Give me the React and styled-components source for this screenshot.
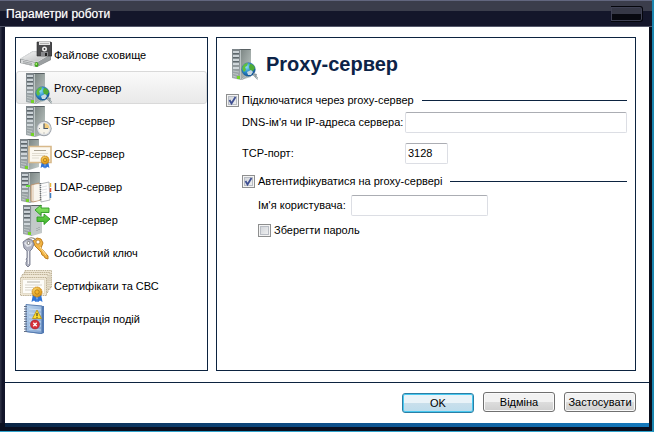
import { useState } from "react";
import styled, { createGlobalStyle, css } from "styled-components";

const GlobalStyle = createGlobalStyle`
  * {
    box-sizing: border-box;
  }
  body {
    margin: 0;
    font-family: "Liberation Sans", Arial, sans-serif;
    font-size: 11px;
    line-height: 16px;
    color: #000;
  }
  button,
  input {
    font: inherit;
    color: inherit;
  }
`;

const WindowBlock = styled.div`
  display: flex;
  flex-direction: column;
  min-height: 100vh;
  background: linear-gradient(to right, #2a2d40 1px, #12152a 2px, #12152a 50%, #0a0e1c);
  border-right: 2px solid #1a86b0;
  border-bottom: 1px solid #2fa3cc;
`;

const TitleBar = styled.header`
  display: flex;
  justify-content: space-between;
  align-items: center;
  height: 27px;
  padding: 0 9px 0 6px;
  background: linear-gradient(#3b3d4b 10px, #14162a 10px);
  border-top: 1px solid #62667e;
  border-bottom: 1px solid #55586a;
  h1 {
    margin: 0;
    font-size: 12px;
    font-weight: 400;
    color: #fff;
    text-shadow: 0 0 1px #aaa;
  }
`;

const CaptionButton = styled.button`
  width: 32px;
  height: 16px;
  padding: 0;
  border: 1px solid #05060c;
  border-left: 0;
  border-radius: 0 3px 3px 0;
  background: linear-gradient(#363846 7px, #080910 7px);
  box-shadow: inset 0 0 0 1px #3f4154;
`;

const Client = styled.div`
  display: flex;
  flex: 1;
  flex-direction: column;
  margin: 0 3px 0 5px;
  background: #fff;
`;

const Content = styled.div`
  display: flex;
  flex: 1;
  gap: 8px;
  padding: 10px 13px 11px 10px;
  border-bottom: 1px solid #0c2340;
`;

const Sidebar = styled.nav`
  flex: 0 0 193px;
  border: 1px solid #0c2340;
`;

const NavItem = styled.button`
  display: flex;
  align-items: center;
  gap: 2px;
  width: 100%;
  height: 33px;
  padding: 0 3px;
  border: 1px solid transparent;
  border-radius: 3px;
  background: none;
  white-space: nowrap;
  ${(props) =>
    props.$active &&
    css`
      border-color: #d9d9d9;
      background: linear-gradient(#fafafa, #e9e9e9);
    `}
`;

const Icon = styled.svg`
  flex: none;
  width: 32px;
  height: 32px;
`;

const Panel = styled.main`
  flex: 1;
  padding: 9px 8px 9px 9px;
  border: 1px solid #0c2340;
`;

const PanelHeader = styled.div`
  display: flex;
  align-items: center;
  gap: 8px;
  height: 33px;
  margin-bottom: 9px;
  h2 {
    margin: 0;
    font-size: 20px;
    line-height: 24px;
    color: #0c2348;
  }
`;

const Group = styled.div`
  padding-left: 16px;
`;

const Row = styled.div`
  display: flex;
  align-items: center;
  height: 22px;
  margin-top: ${(props) => props.$space || 0}px;
  white-space: nowrap;
`;

const Rule = styled.span`
  flex: 1;
  height: 1px;
  margin-left: 8px;
  background: #0c2340;
`;

const FieldLabel = styled.label`
  flex: none;
  width: ${(props) => props.$width}px;
`;

const TextInput = styled.input`
  ${(props) => (props.$width ? `width: ${props.$width}px;` : "flex: 1;")}
  min-width: 0;
  height: 21px;
  padding: 0 2px;
  border: 1px solid #dcdee4;
  border-top-color: #abadb3;
  border-radius: 2px;
  background: #fff;
`;

const CheckLabel = styled.label`
  display: flex;
  align-items: center;
  gap: 3px;
`;

const CheckBox = styled.span`
  display: grid;
  width: 13px;
  height: 13px;
  > * {
    grid-area: 1 / 1;
    width: 13px;
    height: 13px;
    margin: 0;
  }
  input {
    appearance: none;
    border: 1px solid #8e8f8f;
    background: linear-gradient(135deg, #cbcfd5, #f6f6f6);
    box-shadow: inset 0 0 0 1px #f4f4f4, inset 0 0 0 2px #b9bdc4;
  }
  svg {
    pointer-events: none;
  }
`;

const Footer = styled.footer`
  display: flex;
  justify-content: flex-end;
  align-items: flex-start;
  gap: 9px;
  padding: 9px 13px 10px;
`;

const Button = styled.button`
  width: 72px;
  height: 20px;
  padding: 0;
  border: 1px solid #707070;
  border-radius: 3px;
  background: linear-gradient(#f2f2f2 50%, #dddddd 50%, #cfcfcf);
  box-shadow: inset 0 0 0 1px #fafafa;
  line-height: 16px;
  ${(props) =>
    props.$primary &&
    css`
      margin-top: 1px;
      border-color: #2c7fa5;
      background: linear-gradient(#e9f3f8 50%, #c9dfeb 50%, #bcdcec);
      box-shadow: inset 0 0 0 1px #48c8f0;
    `}
`;

const BottomEdge = styled.div`
  height: 8px;
  background:
    linear-gradient(to right, #0b2545, #0d4f8a 50%, #1479bd) 5px 0 / calc(100% - 8px) 4px no-repeat,
    #0a0f20;
`;

const Defs = () => (
  <svg width="0" height="0" style={{ display: "block", height: 0 }} aria-hidden="true">
    <defs>
      <linearGradient id="side" x1="0" y1="0" x2="1" y2="1">
        <stop offset="0" stopColor="#76807e" />
        <stop offset="1" stopColor="#c4cdca" />
      </linearGradient>
      <linearGradient id="front" x1="0" y1="0" x2="0" y2="1">
        <stop offset="0" stopColor="#7b8388" />
        <stop offset="1" stopColor="#a2abad" />
      </linearGradient>
      <radialGradient id="globe" cx="0.35" cy="0.3" r="0.8">
        <stop offset="0" stopColor="#8ce0f5" />
        <stop offset="0.5" stopColor="#278bc9" />
        <stop offset="1" stopColor="#0b3f87" />
      </radialGradient>
      <linearGradient id="drive" x1="0" y1="0" x2="1" y2="1">
        <stop offset="0" stopColor="#f8f8f8" />
        <stop offset="1" stopColor="#b5b7b8" />
      </linearGradient>
      <radialGradient id="gold" cx="0.4" cy="0.35" r="0.7">
        <stop offset="0" stopColor="#ffe07a" />
        <stop offset="1" stopColor="#d58a08" />
      </radialGradient>
      <linearGradient id="arrow" x1="0" y1="0" x2="0" y2="1">
        <stop offset="0" stopColor="#8fe86a" />
        <stop offset="1" stopColor="#3fb52a" />
      </linearGradient>
      <linearGradient id="book" x1="0" y1="0" x2="1" y2="1">
        <stop offset="0" stopColor="#b9d3ee" />
        <stop offset="1" stopColor="#7fa2d0" />
      </linearGradient>
    </defs>
  </svg>
);

const Tower = ({ x = 0, light }) => (
  <g transform={`translate(${x} 0)`}>
    <path d="M7 1h12v28l-10 3z" fill={light ? "#c3c9c9" : "url(#side)"} />
    <path d="M0 1h7l2 1v30l-9-2z" fill="url(#front)" />
    <path d="M0 1h18l1 1H9L7 1z" fill="#596164" />
    <path d="M1 4h6M1 8h6M1 12h6M1 16h6M1 20h6" stroke="#e3eaee" strokeWidth="1.6" />
    <path d="M1 5.5h6M1 9.5h6M1 13.5h6" stroke="#535d62" strokeWidth="0.8" />
    <path d="M1 23l6 1M1 25.500l5 1M1 28l3 1" stroke="#c9d0d1" strokeWidth="0.8" />
    <path d="M8.500 2v29" stroke="#c9d2d1" strokeWidth="0.8" />
    <rect x="5" y="28" width="3" height="3" fill="#74d328" />
  </g>
);

const Rosette = ({ x, y, r }) => (
  <g transform={`translate(${x} ${y})`}>
    <path
      d={`M${-r * 0.8} ${r * 0.4}l${-r * 0.3} ${r * 1.6} ${r * 0.5} ${-r * 0.3} ${r * 0.5} ${r * 0.4} ${r * 0.2} ${-r}z
        M${r * 0.8} ${r * 0.4}l${r * 0.3} ${r * 1.6} ${-r * 0.5} ${-r * 0.3} ${-r * 0.5} ${r * 0.4} ${-r * 0.2} ${-r}z`}
      fill="#2f74d6"
    />
    <circle r={r} fill="url(#gold)" stroke="#c17d0c" strokeWidth="0.8" strokeDasharray="1.5 0.6" />
    <circle r={r * 0.45} fill="#f4b52c" stroke="#a66a08" strokeWidth="0.7" />
  </g>
);

const StorageIcon = () => (
  <Icon viewBox="0 0 32 32">
    <path d="M0 20L13 12l18 3v6L17 28 0 24z" fill="#8c8f91" />
    <path d="M1 19.5L13 12.5l17 3L17 23z" fill="url(#drive)" stroke="#d8dadb" />
    <path d="M1 20.5l15.5 3.5v4L1 24z" fill="#d6d8d9" />
    <path d="M17 24l13-8v4.500L17 28z" fill="#9b9fa1" />
    <path d="M3 22.500l9 2M3 24l9 2" stroke="#8b8f91" strokeWidth="0.7" />
    <ellipse cx="16.500" cy="25.500" rx="2" ry="2.500" fill="#3fa51e" />
    <circle cx="16.300" cy="25" r="0.900" fill="#b8f27d" />
    <path d="M17 3h14l1 1v13H17z" fill="#4b4b4d" stroke="#2c2c2e" strokeWidth="0.600" />
    <path d="M19 3h11v3H19z" fill="#e6e6e6" />
    <path d="M20 4.500h9" stroke="#999" strokeWidth="0.700" />
    <path d="M21 13h7v4h-7z" fill="#88898c" />
    <circle cx="24.500" cy="10" r="2.500" fill="#ededed" />
    <circle cx="24.500" cy="10" r="0.900" fill="#333" />
    <path d="M25 14h2v3h-2z" fill="#222" />
  </Icon>
);

const ProxyIcon = () => (
  <Icon viewBox="0 0 32 32">
    <Tower x={6} />
    <path d="M16 31l5-4 6-1 5 5" fill="none" stroke="#8e9a9d" strokeWidth="1.800" />
    <path d="M16 31l5-4 6-1 5 5" fill="none" stroke="#e6ecec" strokeWidth="0.600" />
    <circle cx="22.500" cy="21.500" r="6.800" fill="url(#globe)" stroke="#1b5c94" strokeWidth="0.500" />
    <path d="M17 18c1-2 3-3 5-3l-1 3-2 1 1 3-2 2c-2-2-2-4-1-6z" fill="#62bf3b" />
    <path d="M24 16c3 0 4 2 5 4l-2 3-3-1-1-3z" fill="#4fac35" />
    <path d="M21 24l4-2 2 2-2 3h-3z" fill="#c6d8e2" />
    <path d="M27 25l4 1-1 4z" fill="#8f9ca1" />
  </Icon>
);

const TspIcon = () => (
  <Icon viewBox="0 0 32 32">
    <Tower x={6} />
    <circle cx="24" cy="23.500" r="7.700" fill="#9ba1a7" />
    <circle cx="24" cy="23.500" r="6.800" fill="#dcdfe3" />
    <circle cx="24" cy="23.500" r="5.500" fill="#f7f4ea" />
    <path d="M24 23.500V18a5.500 5.500 0 0 1 5.500 5.500z" fill="#f4cd7d" />
    <path d="M24 18.500v5h4" fill="none" stroke="#4a5768" strokeWidth="1.200" />
    <path d="M24 27.500v1M19 23.500h1" stroke="#8a8f95" />
  </Icon>
);

const OcspIcon = () => (
  <Icon viewBox="0 0 32 32">
    <Tower />
    <path d="M9 8.500h22v16H9z" fill="#fbf8f0" stroke="#d8b98a" strokeWidth="1.600" />
    <path d="M14 12.500h12" stroke="#aaa392" />
    <path d="M12 15.500h16M12 17.500h13M12 20h7" stroke="#d9d4c8" strokeWidth="0.800" />
    <Rosette x={25} y={22} r={4} />
  </Icon>
);

const LdapIcon = () => (
  <Icon viewBox="0 0 32 32">
    <Tower x={1} />
    <rect x="6" y="14" width="4" height="2" fill="#67df3c" />
    <path d="M11 14l8-2 2 17-8 2-2-1z" fill="#e9dccb" stroke="#b78a61" strokeWidth="0.800" />
    <path d="M14 14l6-1v16l-6 1z" fill="#f8f5ee" />
    <path d="M20 13l9-2 1 18-9 2z" fill="#fdfdfd" stroke="#9fa5a8" strokeWidth="0.800" />
    <path d="M22 16l5-1M22 19l5-1M22 22l5-1M22 25l5-1" stroke="#d4d9dc" strokeWidth="0.700" />
    <path d="M20.500 12v18" stroke="#6f7477" strokeWidth="1.500" strokeDasharray="1 1" />
    <path d="M30.500 12v4" stroke="#e8b53c" strokeWidth="1.500" />
    <path d="M30.500 17v4" stroke="#d84f35" strokeWidth="1.500" />
    <path d="M30.500 22v5" stroke="#3d7cc2" strokeWidth="1.500" />
  </Icon>
);

const CmpIcon = () => (
  <Icon viewBox="0 0 32 32">
    <Tower x={3} light />
    <path
      d="M15 6l6-5v3h8v4.500h-8v3zM30 15l-6-5v3h-7v4.500h7v3z"
      fill="url(#arrow)"
      stroke="#2c9a22"
      strokeWidth="0.900"
    />
    <path d="M17 24v4M19 23v4" stroke="#8e9899" strokeDasharray="1 1" />
  </Icon>
);

const KeyIcon = () => (
  <Icon viewBox="0 0 32 32">
    <path d="M13 4l4-3 4 1 2 4-2 5 7 8v3l-3-1-1-2-2-1-1-3-2-2-4-4z" fill="#f2b443" stroke="#b57413" strokeWidth="0.900" />
    <circle cx="18" cy="5" r="2" fill="#fff" stroke="#a96b14" strokeWidth="0.700" />
    <path d="M20 10l6 8" stroke="#ffe4a2" />
    <path d="M3 5l4-3 5 1 2 4-2 5-2 2v14l-2 2-2-2v-3l1-1-1-2 1-1V14l-3-3z" fill="#b1b4c2" stroke="#777b8c" strokeWidth="0.900" />
    <path d="M4 6l4-2 4 2-1 3-4 1z" fill="#e2e4eb" />
    <circle cx="8.500" cy="6" r="1.500" fill="#fff" stroke="#555" strokeWidth="0.700" />
    <path d="M8.500 14v13" stroke="#edeef3" />
    <path d="M7 3c2-3 6-3 9 0" fill="none" stroke="#8d8577" strokeWidth="1.200" />
  </Icon>
);

const CertIcon = () => (
  <Icon viewBox="0 0 32 32">
    <g fill="#efe7d5" stroke="#b8ab8e" strokeWidth="0.900" strokeDasharray="1.500 0.700">
      <path d="M5 0.500h26.500v17H5z" />
      <path d="M4 2.500h26v17H4z" />
      <path d="M2 4.500h26v18H2z" />
      <path d="M0.500 7.500h26v18H0.500z" />
    </g>
    <path d="M2.500 9.500h22v14h-22z" fill="#fdfcf8" stroke="#ddd4be" strokeWidth="0.700" />
    <path d="M7 12h13" stroke="#b5b2a8" />
    <path d="M5 15h17M5 17.500h9M5 20h7" stroke="#d5d3ca" strokeWidth="0.900" />
    <Rosette x={17} y={22} r={5} />
  </Icon>
);

const LogIcon = () => (
  <Icon viewBox="0 0 32 32">
    <path d="M7 2l17 1v27L21 31 6 29z" fill="#527ab5" />
    <path d="M6 1.500l16 1.500V30.500L6 28.500z" fill="url(#book)" stroke="#5378ad" strokeWidth="0.900" />
    <path d="M9 6l12 1M9 10l12 1M9 14l12 1M9 18l12 1M9 22l12 1M9 26l12 1" stroke="#d4e4f5" strokeWidth="0.800" />
    <path d="M5.500 3v26" stroke="#626f86" strokeWidth="3" strokeDasharray="1 1.500" />
    <path d="M17 7l4.500 8.500h-9z" fill="#ffdf2e" stroke="#b98e09" strokeWidth="0.800" />
    <path d="M17 10v3M17 13.800v1" stroke="#222" />
    <circle cx="15" cy="21.500" r="4.500" fill="#d6303a" stroke="#9d1c27" strokeWidth="0.600" />
    <path d="M13.300 19.800l3.400 3.400M16.700 19.800l-3.400 3.400" stroke="#fff" strokeWidth="1.300" />
  </Icon>
);

const sections = [
  { id: "storage", name: "Файлове сховище", SectionIcon: StorageIcon },
  { id: "proxy", name: "Proxy-сервер", SectionIcon: ProxyIcon },
  { id: "tsp", name: "TSP-сервер", SectionIcon: TspIcon },
  { id: "ocsp", name: "OCSP-сервер", SectionIcon: OcspIcon },
  { id: "ldap", name: "LDAP-сервер", SectionIcon: LdapIcon },
  { id: "cmp", name: "CMP-сервер", SectionIcon: CmpIcon },
  { id: "key", name: "Особистий ключ", SectionIcon: KeyIcon },
  { id: "certs", name: "Сертифікати та СВС", SectionIcon: CertIcon },
  { id: "log", name: "Реєстрація подій", SectionIcon: LogIcon },
];

const Check = ({ checked, onChange, children }) => (
  <CheckLabel>
    <CheckBox>
      <input type="checkbox" checked={checked} onChange={onChange} />
      {checked && (
        <svg viewBox="0 0 13 13">
          <path d="M3.500 6l2 3.500L9.500 3" fill="none" stroke="#3f4f92" strokeWidth="1.800" />
        </svg>
      )}
    </CheckBox>
    {children}
  </CheckLabel>
);

const App = () => {
  const [active, setActive] = useState("proxy");
  const [form, setForm] = useState({
    useProxy: true,
    host: "",
    port: "3128",
    auth: true,
    user: "",
    savePassword: false,
  });

  const onToggle = (key) => () => setForm({ ...form, [key]: !form[key] });
  const onText = (key) => (e) => setForm({ ...form, [key]: e.target.value });

  return (
    <>
      <GlobalStyle />
      <Defs />
      <WindowBlock>
        <TitleBar>
          <h1>Параметри роботи</h1>
          <CaptionButton type="button" />
        </TitleBar>
        <Client>
          <Content>
            <Sidebar>
              {sections.map(({ id, name, SectionIcon }) => (
                <NavItem key={id} type="button" $active={id === active} onClick={() => setActive(id)}>
                  <SectionIcon />
                  {name}
                </NavItem>
              ))}
            </Sidebar>
            <Panel>
              <PanelHeader>
                <ProxyIcon />
                <h2>Proxy-сервер</h2>
              </PanelHeader>
              <Row>
                <Check checked={form.useProxy} onChange={onToggle("useProxy")}>
                  Підключатися через proxy-сервер
                </Check>
                <Rule />
              </Row>
              <Group>
                <Row>
                  <FieldLabel htmlFor="host" $width={163}>
                    DNS-ім'я чи IP-адреса сервера:
                  </FieldLabel>
                  <TextInput id="host" value={form.host} onChange={onText("host")} />
                </Row>
                <Row $space={9}>
                  <FieldLabel htmlFor="port" $width={163}>
                    TCP-порт:
                  </FieldLabel>
                  <TextInput id="port" $width={43} value={form.port} onChange={onText("port")} />
                </Row>
                <Row $space={6}>
                  <Check checked={form.auth} onChange={onToggle("auth")}>
                    Автентифікуватися на proxy-сервері
                  </Check>
                  <Rule />
                </Row>
                <Group>
                  <Row $space={2}>
                    <FieldLabel htmlFor="user" $width={93}>
                      Ім'я користувача:
                    </FieldLabel>
                    <TextInput id="user" $width={137} value={form.user} onChange={onText("user")} />
                  </Row>
                  <Row $space={3}>
                    <Check checked={form.savePassword} onChange={onToggle("savePassword")}>
                      Зберегти пароль
                    </Check>
                  </Row>
                </Group>
              </Group>
            </Panel>
          </Content>
          <Footer>
            <Button type="button" $primary>
              OK
            </Button>
            <Button type="button">Відміна</Button>
            <Button type="button">Застосувати</Button>
          </Footer>
        </Client>
        <BottomEdge />
      </WindowBlock>
    </>
  );
};

export default App;
